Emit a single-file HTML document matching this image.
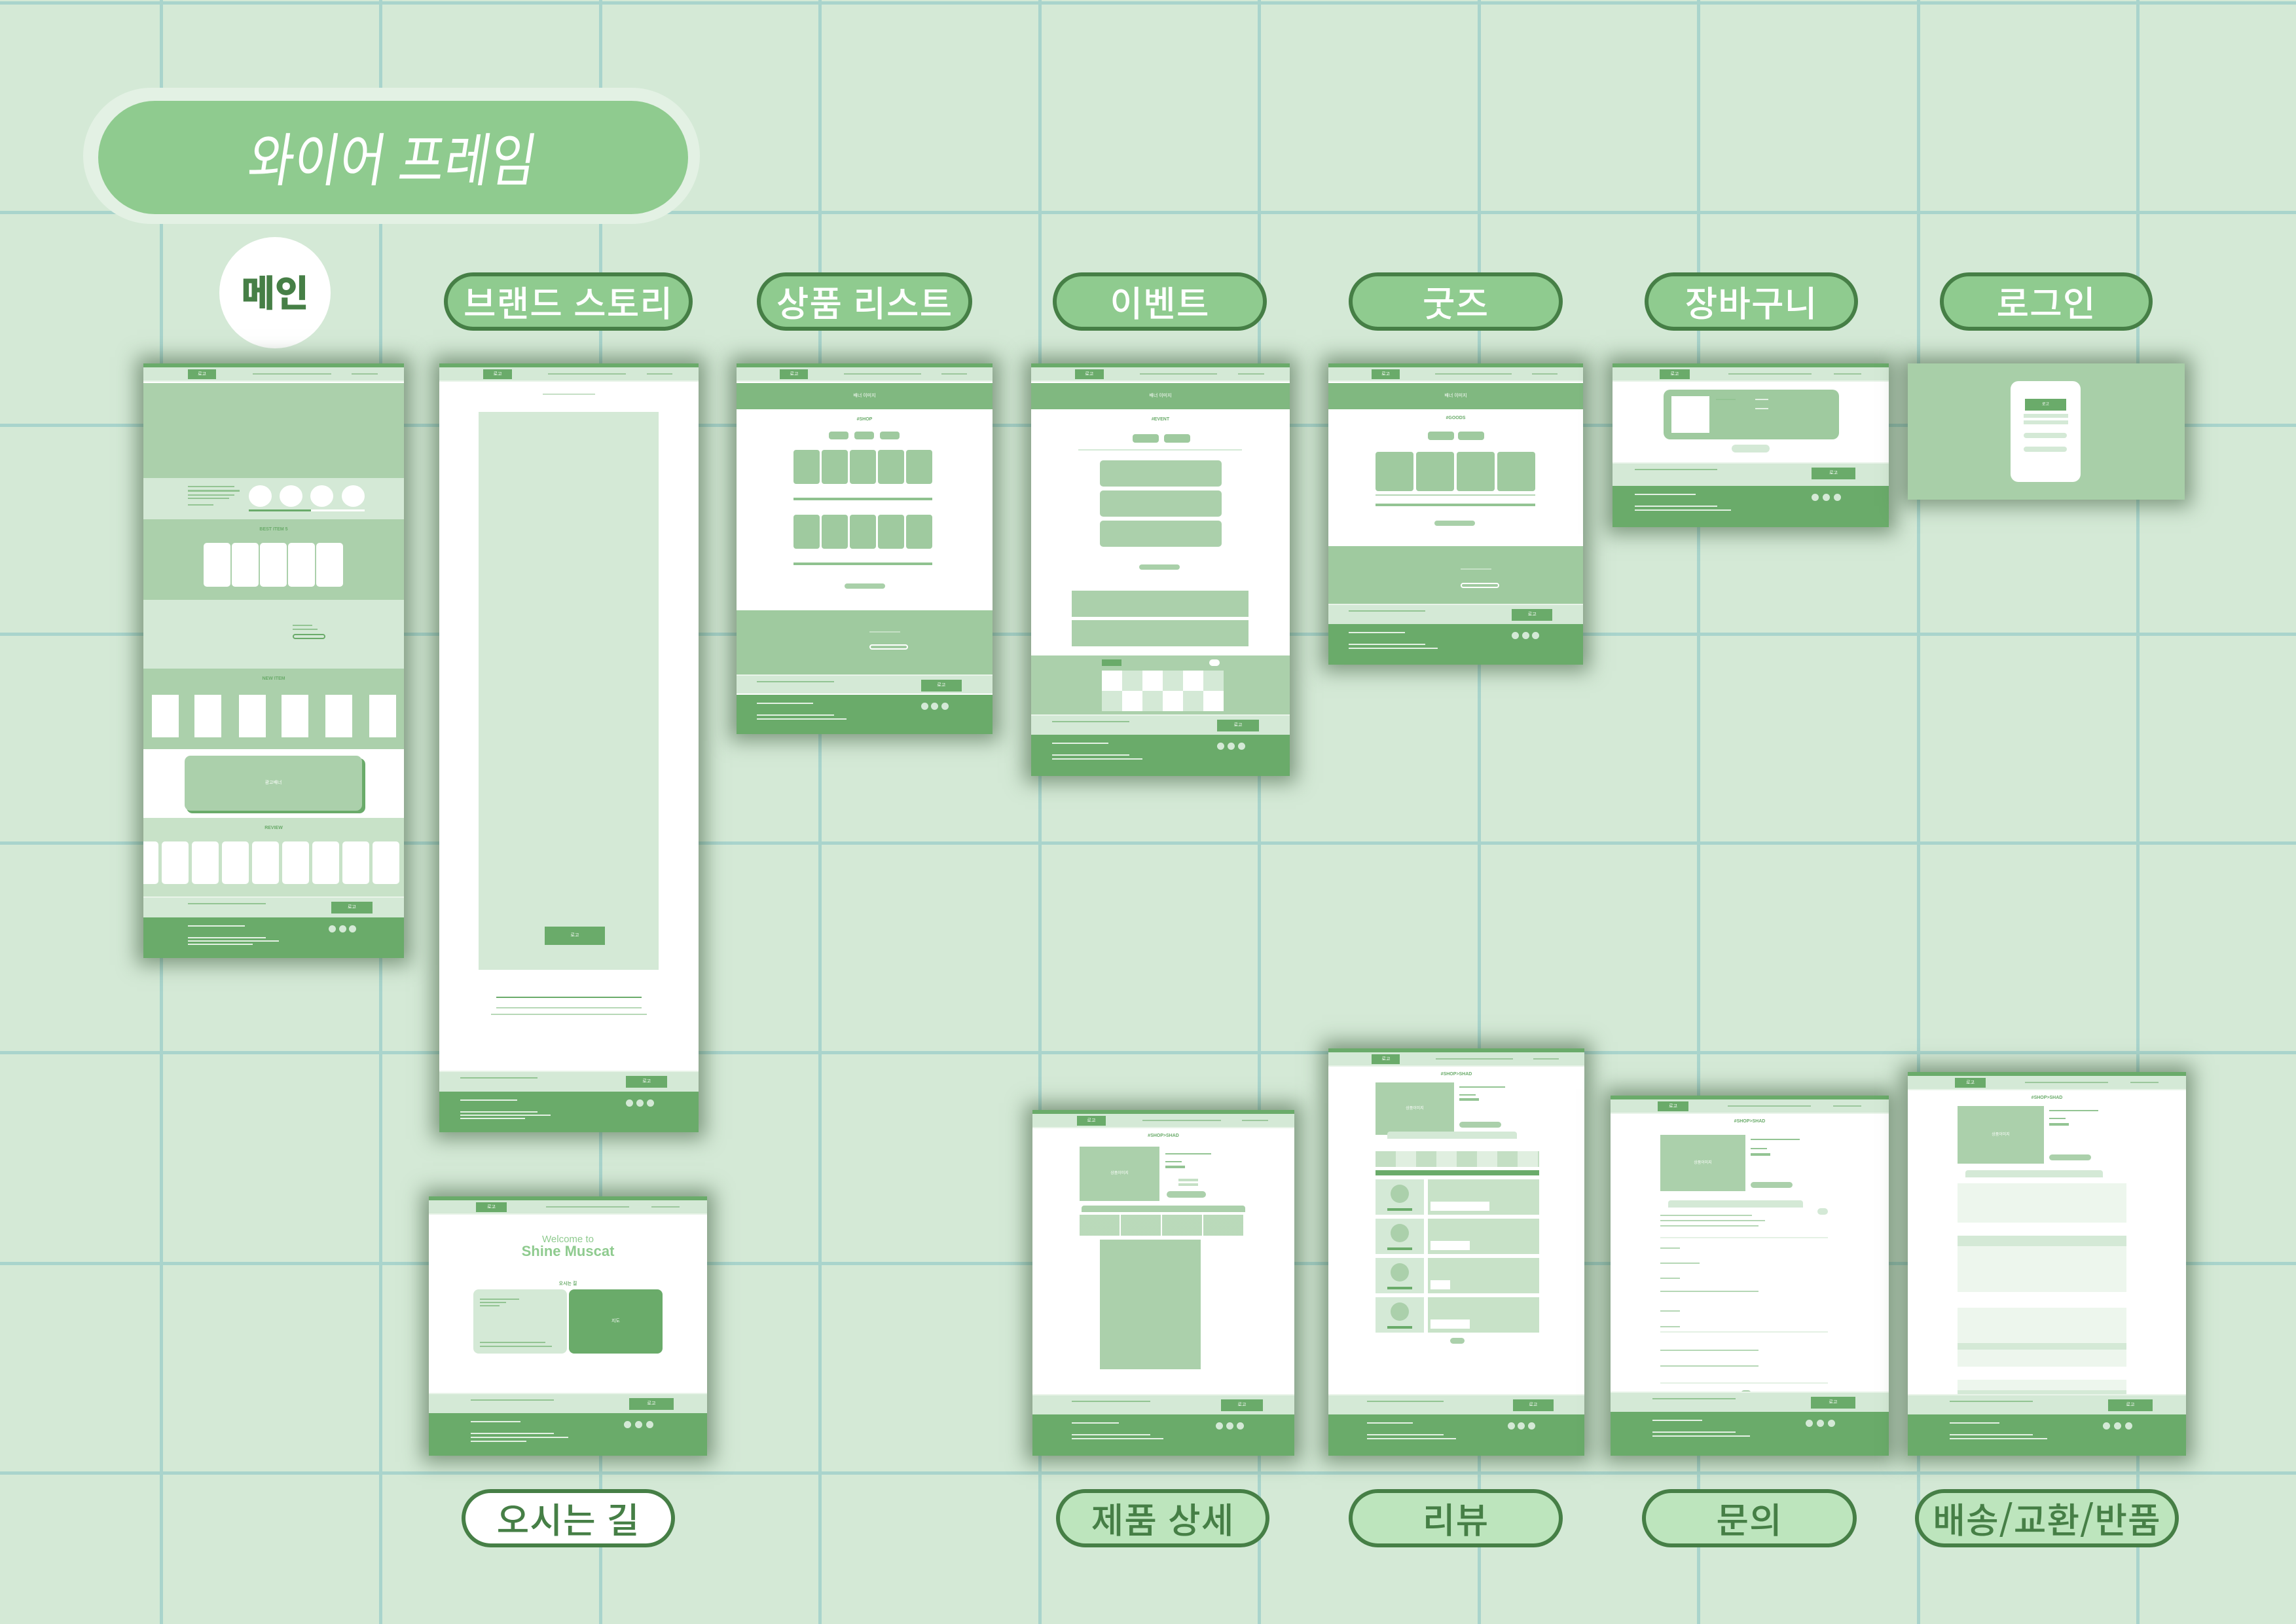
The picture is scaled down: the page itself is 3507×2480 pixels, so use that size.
<!DOCTYPE html>
<html lang="ko"><head><meta charset="utf-8">
<style>
*{margin:0;padding:0;box-sizing:border-box}
html,body{width:3507px;height:2480px;overflow:hidden}
body{background:#d4e9d6;position:relative;font-family:"Liberation Sans","Noto Sans CJK KR",sans-serif}
.a{position:absolute}
.vl{position:absolute;top:0;width:5px;height:2480px;background:#a9d4cc}
.hl{position:absolute;left:0;height:5px;width:3507px;background:#a9d4cc}
.pill{position:absolute;height:89px;border-radius:45px;border:6px solid #467f46;background:#8fcb8f;color:#fff;font-size:54px;font-weight:500;text-align:center;line-height:76px;font-family:"Noto Sans CJK KR",sans-serif;letter-spacing:1px}
.pill.b{background:#bde5bd;color:#467f46;height:89px}
.pill.wt{background:#fff;color:#467f46}
.mk{position:absolute;background:#fff;box-shadow:0 0 28px 10px rgba(55,85,55,.55);overflow:hidden}
.tb{position:absolute;left:0;top:0;width:100%;height:6px;background:#6aab6a}
.hd{position:absolute;left:0;top:6px;width:100%;height:22px;background:#d4e9d6;border-bottom:2px solid #e9f4e9}
.lg{position:absolute;left:17%;top:3px;width:11%;height:15px;background:#6aab6a;color:#fff;font-size:7px;text-align:center;line-height:15px}
.nv{position:absolute;top:9px;height:2px;background:#9cc79c}
.fl{position:absolute;left:0;width:100%;height:32px;bottom:62px;background:#d4e9d6;border-top:2px solid #e9f4e9}
.fbtn{position:absolute;right:12%;top:6px;width:16%;height:18px;background:#6aab6a;color:#fff;font-size:7px;text-align:center;line-height:18px}
.fd{position:absolute;left:0;width:100%;height:62px;bottom:0;background:#6aab6a}
.ci{position:absolute;top:12px;width:11px;height:11px;border-radius:50%;background:#d4e9d6}
.tl{position:absolute;height:2px;background:#e4f1e4}
.ln{position:absolute;height:2px;background:#93c493}
.g1{background:#6aab6a}.g2{background:#abd0ab}.g3{background:#d4e9d6}.g4{background:#80b880}.g5{background:#9fca9f}.w{background:#fff}
.t{position:absolute;color:#6aab6a;font-size:7px;font-weight:bold;text-align:center}
</style></head><body>

<div class="vl" style="left:244px"></div><div class="vl" style="left:579px"></div><div class="vl" style="left:915px"></div><div class="vl" style="left:1250px"></div><div class="vl" style="left:1586px"></div><div class="vl" style="left:1921px"></div><div class="vl" style="left:2257px"></div><div class="vl" style="left:2592px"></div><div class="vl" style="left:2928px"></div><div class="vl" style="left:3263px"></div>
<div class="hl" style="top:2px"></div><div class="hl" style="top:322px"></div><div class="hl" style="top:647px"></div><div class="hl" style="top:966px"></div><div class="hl" style="top:1285px"></div><div class="hl" style="top:1605px"></div><div class="hl" style="top:1927px"></div><div class="hl" style="top:2247px"></div>

<div class="a" style="left:127px;top:134px;width:942px;height:208px;border-radius:104px;background:#e3f1e4"></div>
<div class="a" style="left:150px;top:154px;width:901px;height:173px;border-radius:87px;background:#8fcb8f"></div>
<div class="a" style="left:150px;top:154px;width:901px;height:173px;color:#fff;font-size:88px;font-weight:400;text-align:center;line-height:170px;font-family:'Noto Sans CJK KR',sans-serif;transform:skewX(-9deg) scaleX(.86)">와이어 프레임</div>

<div class="a" style="left:335px;top:362px;width:170px;height:170px;border-radius:50%;background:#fff;color:#467f46;font-size:56px;font-weight:900;text-align:center;line-height:166px;font-family:'Noto Sans CJK KR',sans-serif">메인</div>
<div class="pill" style="left:678px;top:416px;width:380px">브랜드 스토리</div>
<div class="pill" style="left:1156px;top:416px;width:329px">상품 리스트</div>
<div class="pill" style="left:1608px;top:416px;width:327px">이벤트</div>
<div class="pill" style="left:2060px;top:416px;width:327px">굿즈</div>
<div class="pill" style="left:2512px;top:416px;width:326px">장바구니</div>
<div class="pill" style="left:2963px;top:416px;width:325px">로그인</div>

<div class="pill wt" style="left:705px;top:2274px;width:326px">오시는 길</div>
<div class="pill b" style="left:1613px;top:2274px;width:326px">제품 상세</div>
<div class="pill b" style="left:2060px;top:2274px;width:327px">리뷰</div>
<div class="pill b" style="left:2508px;top:2274px;width:328px">문의</div>
<div class="pill b" style="left:2925px;top:2274px;width:403px">배송/교환/반품</div>

<div class="mk" style="left:219px;top:555px;width:398px;height:908px">
 <div class="tb"></div><div class="hd"><div class="lg">로고</div><div class="nv" style="left:42%;width:30%"></div><div class="nv" style="left:80%;width:10%"></div></div>
 <div class="a g2" style="left:0;top:30px;width:100%;height:145px"></div>
 <div class="a g3" style="left:0;top:175px;width:100%;height:63px">
  <div class="ln" style="left:17%;top:12px;width:18%"></div><div class="ln" style="left:17%;top:18px;width:20%;height:3px"></div><div class="ln" style="left:17%;top:25px;width:18%"></div><div class="ln" style="left:17%;top:30px;width:16%"></div><div class="ln" style="left:17%;top:40px;width:10%"></div>
  <div class="a w" style="left:161px;top:11px;width:35px;height:33px;border-radius:50%"></div><div class="a w" style="left:208px;top:11px;width:35px;height:33px;border-radius:50%"></div><div class="a w" style="left:255px;top:11px;width:35px;height:33px;border-radius:50%"></div><div class="a w" style="left:303px;top:11px;width:35px;height:33px;border-radius:50%"></div>
  <div class="a w" style="left:161px;top:48px;width:177px;height:3px"></div><div class="a g1" style="left:161px;top:48px;width:95px;height:3px"></div>
 </div>
 <div class="a g2" style="left:0;top:238px;width:100%;height:123px"><div class="t" style="left:0;width:100%;top:12px">BEST ITEM 5</div>
  <div class="a w" style="left:92px;top:36px;width:41px;height:67px;border-radius:5px"></div><div class="a w" style="left:135px;top:36px;width:41px;height:67px;border-radius:5px"></div><div class="a w" style="left:178px;top:36px;width:41px;height:67px;border-radius:5px"></div><div class="a w" style="left:221px;top:36px;width:41px;height:67px;border-radius:5px"></div><div class="a w" style="left:264px;top:36px;width:41px;height:67px;border-radius:5px"></div></div>
 <div class="a g3" style="left:0;top:361px;width:100%;height:105px"><div class="ln" style="left:228px;top:38px;width:30px"></div><div class="ln" style="left:228px;top:44px;width:38px"></div><div class="a" style="left:228px;top:52px;width:50px;height:8px;border:2px solid #6aab6a;border-radius:5px"></div></div>
 <div class="a g2" style="left:0;top:466px;width:100%;height:123px"><div class="t" style="left:0;width:100%;top:12px">NEW ITEM</div>
  <div class="a w" style="left:13px;top:40px;width:41px;height:65px"></div><div class="a w" style="left:78px;top:40px;width:41px;height:65px"></div><div class="a w" style="left:146px;top:40px;width:41px;height:65px"></div><div class="a w" style="left:211px;top:40px;width:41px;height:65px"></div><div class="a w" style="left:278px;top:40px;width:41px;height:65px"></div><div class="a w" style="left:345px;top:40px;width:41px;height:65px"></div></div>
 <div class="a w" style="left:0;top:589px;width:100%;height:105px"><div class="a g1" style="left:66px;top:14px;width:273px;height:84px;border-radius:9px"></div><div class="a g2" style="left:63px;top:10px;width:271px;height:84px;border-radius:9px;color:#fff;font-size:7px;text-align:center;line-height:84px">광고배너</div></div>
 <div class="a" style="left:0;top:694px;width:100%;height:123px;background:#c8e2c8"><div class="t" style="left:0;width:100%;top:12px">REVIEW</div>
  <div class="a w" style="left:-18px;top:36px;width:41px;height:65px;border-radius:5px"></div><div class="a w" style="left:28px;top:36px;width:41px;height:65px;border-radius:5px"></div><div class="a w" style="left:74px;top:36px;width:41px;height:65px;border-radius:5px"></div><div class="a w" style="left:120px;top:36px;width:41px;height:65px;border-radius:5px"></div><div class="a w" style="left:166px;top:36px;width:41px;height:65px;border-radius:5px"></div><div class="a w" style="left:212px;top:36px;width:41px;height:65px;border-radius:5px"></div><div class="a w" style="left:258px;top:36px;width:41px;height:65px;border-radius:5px"></div><div class="a w" style="left:304px;top:36px;width:41px;height:65px;border-radius:5px"></div><div class="a w" style="left:350px;top:36px;width:41px;height:65px;border-radius:5px"></div></div>
 <div class="fl"><div class="fbtn">로고</div><div class="ln" style="left:17%;top:8px;width:30%"></div></div>
 <div class="fd"><div class="ci" style="left:71%"></div><div class="ci" style="left:75%"></div><div class="ci" style="left:79%"></div><div class="tl" style="left:17%;top:12px;width:22%"></div><div class="tl" style="left:17%;top:30px;width:30%"></div><div class="tl" style="left:17%;top:35px;width:35%"></div><div class="tl" style="left:17%;top:40px;width:25%"></div></div>
</div>

<div class="mk" style="left:671px;top:555px;width:396px;height:1174px">
 <div class="tb"></div><div class="hd"><div class="lg">로고</div><div class="nv" style="left:42%;width:30%"></div><div class="nv" style="left:80%;width:10%"></div></div>
 <div class="ln" style="left:40%;top:46px;width:20%;background:#c5dfc5"></div>
 <div class="a g3" style="left:60px;top:74px;width:275px;height:852px"></div>
 <div class="a g1" style="left:161px;top:860px;width:92px;height:28px;color:#fff;font-size:7px;text-align:center;line-height:28px">로고</div>
 <div class="ln" style="left:22%;top:967px;width:56%;background:#6aab6a"></div>
 <div class="ln" style="left:22%;top:983px;width:56%;background:#b7d8b7"></div><div class="ln" style="left:20%;top:993px;width:60%;background:#b7d8b7"></div>
 <div class="fl"><div class="fbtn">로고</div><div class="ln" style="left:8%;top:8px;width:30%"></div></div>
 <div class="fd"><div class="ci" style="left:72%"></div><div class="ci" style="left:76%"></div><div class="ci" style="left:80%"></div><div class="tl" style="left:8%;top:12px;width:22%"></div><div class="tl" style="left:8%;top:30px;width:30%"></div><div class="tl" style="left:8%;top:35px;width:35%"></div><div class="tl" style="left:8%;top:40px;width:25%"></div></div>
</div>

<div class="mk" style="left:1125px;top:555px;width:391px;height:566px">
 <div class="tb"></div><div class="hd"><div class="lg">로고</div><div class="nv" style="left:42%;width:30%"></div><div class="nv" style="left:80%;width:10%"></div></div>
 <div class="a g4" style="left:0;top:30px;width:100%;height:40px;color:#fff;font-size:7px;text-align:center;line-height:40px">배너 이미지</div>
 <div class="t" style="left:0;width:100%;top:82px">#SHOP</div>
 <div class="a g5" style="left:141px;top:104px;width:30px;height:12px;border-radius:4px"></div><div class="a g5" style="left:180px;top:104px;width:30px;height:12px;border-radius:4px"></div><div class="a g5" style="left:219px;top:104px;width:30px;height:12px;border-radius:4px"></div>
 <div class="a g5" style="left:87px;top:132px;width:40px;height:52px;border-radius:4px"></div><div class="a g5" style="left:130px;top:132px;width:40px;height:52px;border-radius:4px"></div><div class="a g5" style="left:173px;top:132px;width:40px;height:52px;border-radius:4px"></div><div class="a g5" style="left:216px;top:132px;width:40px;height:52px;border-radius:4px"></div><div class="a g5" style="left:259px;top:132px;width:40px;height:52px;border-radius:4px"></div>
 <div class="ln" style="left:87px;top:205px;width:212px;height:4px;background:#8fc28f"></div>
 <div class="a g5" style="left:87px;top:231px;width:40px;height:52px;border-radius:4px"></div><div class="a g5" style="left:130px;top:231px;width:40px;height:52px;border-radius:4px"></div><div class="a g5" style="left:173px;top:231px;width:40px;height:52px;border-radius:4px"></div><div class="a g5" style="left:216px;top:231px;width:40px;height:52px;border-radius:4px"></div><div class="a g5" style="left:259px;top:231px;width:40px;height:52px;border-radius:4px"></div>
 <div class="ln" style="left:87px;top:304px;width:212px;height:4px;background:#8fc28f"></div>
 <div class="ln" style="left:165px;top:336px;width:62px;height:8px;background:#a9d0a9;border-radius:4px"></div>
 <div class="a g5" style="left:0;top:377px;width:100%;height:103px"><div class="ln" style="left:52%;top:32px;width:12%;background:#c5e0c5"></div><div class="a" style="left:52%;top:52px;width:15%;height:8px;border:2px solid #fff;border-radius:5px"></div></div>
 <div class="fl" style="height:29px"><div class="fbtn">로고</div><div class="ln" style="left:8%;top:8px;width:30%"></div></div>
 <div class="fd" style="height:60px"><div class="ci" style="left:72%"></div><div class="ci" style="left:76%"></div><div class="ci" style="left:80%"></div><div class="tl" style="left:8%;top:12px;width:22%"></div><div class="tl" style="left:8%;top:30px;width:30%"></div><div class="tl" style="left:8%;top:36px;width:35%"></div></div>
</div>

<div class="mk" style="left:1575px;top:555px;width:395px;height:630px">
 <div class="tb"></div><div class="hd"><div class="lg">로고</div><div class="nv" style="left:42%;width:30%"></div><div class="nv" style="left:80%;width:10%"></div></div>
 <div class="a g4" style="left:0;top:30px;width:100%;height:40px;color:#fff;font-size:7px;text-align:center;line-height:40px">배너 이미지</div>
 <div class="t" style="left:0;width:100%;top:82px">#EVENT</div>
 <div class="a g5" style="left:155px;top:108px;width:40px;height:13px;border-radius:4px"></div><div class="a g5" style="left:203px;top:108px;width:40px;height:13px;border-radius:4px"></div>
 <div class="ln" style="left:72px;top:131px;width:250px;background:#d4e9d6"></div>
 <div class="a g2" style="left:105px;top:148px;width:186px;height:40px;border-radius:5px"></div><div class="a g2" style="left:105px;top:194px;width:186px;height:40px;border-radius:5px"></div><div class="a g2" style="left:105px;top:240px;width:186px;height:40px;border-radius:5px"></div>
 <div class="ln" style="left:165px;top:307px;width:62px;height:8px;background:#a9d0a9;border-radius:4px"></div>
 <div class="a g2" style="left:62px;top:347px;width:270px;height:40px"></div><div class="a g2" style="left:62px;top:392px;width:270px;height:40px"></div>
 <div class="a g2" style="left:0;top:446px;width:100%;height:92px">
  <div class="a g1" style="left:108px;top:6px;width:30px;height:10px"></div><div class="a w" style="left:272px;top:6px;width:16px;height:10px;border-radius:5px"></div>
  <div class="a" style="left:108px;top:23px;width:186px;height:62px;background:repeating-linear-gradient(90deg,#fff 0 31px,#d4e9d6 31px 62px)"></div>
  <div class="a" style="left:108px;top:54px;width:186px;height:31px;background:repeating-linear-gradient(90deg,#d4e9d6 0 31px,#fff 31px 62px)"></div>
 </div>
 <div class="fl" style="height:31px;bottom:63px"><div class="fbtn">로고</div><div class="ln" style="left:8%;top:8px;width:30%"></div></div>
 <div class="fd" style="height:63px"><div class="ci" style="left:72%"></div><div class="ci" style="left:76%"></div><div class="ci" style="left:80%"></div><div class="tl" style="left:8%;top:12px;width:22%"></div><div class="tl" style="left:8%;top:30px;width:30%"></div><div class="tl" style="left:8%;top:36px;width:35%"></div></div>
</div>

<div class="mk" style="left:2029px;top:555px;width:389px;height:460px">
 <div class="tb"></div><div class="hd"><div class="lg">로고</div><div class="nv" style="left:42%;width:30%"></div><div class="nv" style="left:80%;width:10%"></div></div>
 <div class="a g4" style="left:0;top:30px;width:100%;height:40px;color:#fff;font-size:7px;text-align:center;line-height:40px">배너 이미지</div>
 <div class="t" style="left:0;width:100%;top:80px">#GOODS</div>
 <div class="a g5" style="left:152px;top:104px;width:40px;height:13px;border-radius:4px"></div><div class="a g5" style="left:198px;top:104px;width:40px;height:13px;border-radius:4px"></div>
 <div class="a g5" style="left:72px;top:135px;width:58px;height:60px;border-radius:4px"></div><div class="a g5" style="left:134px;top:135px;width:58px;height:60px;border-radius:4px"></div><div class="a g5" style="left:196px;top:135px;width:58px;height:60px;border-radius:4px"></div><div class="a g5" style="left:258px;top:135px;width:58px;height:60px;border-radius:4px"></div>
 <div class="ln" style="left:72px;top:200px;width:244px;background:#b5d7b5"></div><div class="ln" style="left:72px;top:214px;width:244px;height:4px"></div>
 <div class="ln" style="left:162px;top:240px;width:62px;height:8px;background:#a9d0a9;border-radius:4px"></div>
 <div class="a g5" style="left:0;top:279px;width:100%;height:99px"><div class="ln" style="left:52%;top:34px;width:12%;background:#c5e0c5"></div><div class="a" style="left:52%;top:56px;width:15%;height:8px;border:2px solid #fff;border-radius:5px"></div></div>
 <div class="fl" style="height:31px"><div class="fbtn">로고</div><div class="ln" style="left:8%;top:8px;width:30%"></div></div>
 <div class="fd"><div class="ci" style="left:72%"></div><div class="ci" style="left:76%"></div><div class="ci" style="left:80%"></div><div class="tl" style="left:8%;top:12px;width:22%"></div><div class="tl" style="left:8%;top:30px;width:30%"></div><div class="tl" style="left:8%;top:36px;width:35%"></div></div>
</div>

<div class="mk" style="left:2463px;top:555px;width:422px;height:250px">
 <div class="tb"></div><div class="hd"><div class="lg">로고</div><div class="nv" style="left:42%;width:30%"></div><div class="nv" style="left:80%;width:10%"></div></div>
 <div class="a g5" style="left:78px;top:40px;width:268px;height:76px;border-radius:10px"><div class="a w" style="left:12px;top:10px;width:58px;height:56px"></div><div class="ln" style="left:80px;top:14px;width:30px"></div><div class="ln" style="left:140px;top:14px;width:20px;background:#e4f1e4"></div><div class="ln" style="left:140px;top:28px;width:20px;background:#e4f1e4"></div></div>
 <div class="a g3" style="left:182px;top:124px;width:58px;height:12px;border-radius:6px"></div>
 <div class="fl" style="height:36px;bottom:63px"><div class="fbtn">로고</div><div class="ln" style="left:8%;top:8px;width:30%"></div></div>
 <div class="fd" style="height:63px"><div class="ci" style="left:72%"></div><div class="ci" style="left:76%"></div><div class="ci" style="left:80%"></div><div class="tl" style="left:8%;top:12px;width:22%"></div><div class="tl" style="left:8%;top:30px;width:30%"></div><div class="tl" style="left:8%;top:36px;width:35%"></div></div>
</div>

<div class="mk" style="left:2914px;top:555px;width:423px;height:208px;background:#a8cfa8">
 <div class="a w" style="left:157px;top:27px;width:107px;height:154px;border-radius:12px">
  <div class="a g1" style="left:22px;top:27px;width:63px;height:18px;color:#fff;font-size:6px;text-align:center;line-height:18px">로고</div>
  <div class="a g3" style="left:20px;top:50px;width:68px;height:6px"></div><div class="a g3" style="left:20px;top:60px;width:68px;height:6px"></div>
  <div class="a g3" style="left:20px;top:79px;width:66px;height:8px;border-radius:4px"></div><div class="a g3" style="left:20px;top:100px;width:66px;height:8px;border-radius:4px"></div>
 </div>
</div>

<div class="mk" style="left:655px;top:1827px;width:425px;height:396px">
 <div class="tb"></div><div class="hd"><div class="lg">로고</div><div class="nv" style="left:42%;width:30%"></div><div class="nv" style="left:80%;width:10%"></div></div>
 <div class="a" style="left:0;top:58px;width:100%;text-align:center;color:#8fcb8f;font-size:15px;line-height:15px">Welcome to</div>
 <div class="a" style="left:0;top:73px;width:100%;text-align:center;color:#8fcb8f;font-size:22px;font-weight:bold;line-height:22px">Shine Muscat</div>
 <div class="t" style="left:0;width:100%;top:128px">오시는 길</div>
 <div class="a g3" style="left:68px;top:142px;width:143px;height:98px;border-radius:8px"><div class="ln" style="left:10px;top:14px;width:60px"></div><div class="ln" style="left:10px;top:19px;width:40px"></div><div class="ln" style="left:10px;top:24px;width:30px"></div><div class="ln" style="left:10px;top:80px;width:100px"></div><div class="ln" style="left:10px;top:86px;width:110px"></div></div>
 <div class="a g1" style="left:214px;top:142px;width:143px;height:98px;border-radius:8px;color:#fff;font-size:7px;text-align:center;line-height:98px">지도</div>
 <div class="fl" style="height:31px;bottom:65px"><div class="fbtn">로고</div><div class="ln" style="left:15%;top:8px;width:30%"></div></div>
 <div class="fd" style="height:65px"><div class="ci" style="left:70%"></div><div class="ci" style="left:74%"></div><div class="ci" style="left:78%"></div><div class="tl" style="left:15%;top:12px;width:18%"></div><div class="tl" style="left:15%;top:30px;width:30%"></div><div class="tl" style="left:15%;top:36px;width:35%"></div><div class="tl" style="left:15%;top:42px;width:20%"></div></div>
</div>

<div class="mk" style="left:1577px;top:1695px;width:400px;height:528px">
 <div class="tb"></div><div class="hd"><div class="lg">로고</div><div class="nv" style="left:42%;width:30%"></div><div class="nv" style="left:80%;width:10%"></div></div>
 <div class="t" style="left:0;width:100%;top:36px">#SHOP&gt;SHAD</div>
 <div class="a g2" style="left:72px;top:56px;width:122px;height:83px;color:#fff;font-size:6px;text-align:center;line-height:83px">상품이미지</div>
 <div class="ln" style="left:203px;top:66px;width:70px"></div><div class="ln" style="left:203px;top:78px;width:25px"></div><div class="ln" style="left:203px;top:85px;width:30px;height:4px"></div><div class="ln" style="left:223px;top:105px;width:30px;background:#c5e0c5;height:4px"></div><div class="ln" style="left:223px;top:112px;width:30px;background:#c5e0c5;height:4px"></div>
 <div class="a g2" style="left:205px;top:124px;width:60px;height:10px;border-radius:5px"></div>
 <div class="a g2" style="left:75px;top:146px;width:250px;height:10px;border-radius:4px 4px 0 0"></div>
 <div class="a" style="left:72px;top:160px;width:250px;height:32px;background:repeating-linear-gradient(90deg,#a9d0a9 0 61px,#fff 61px 63px);opacity:.8"></div>
 <div class="a g2" style="left:103px;top:198px;width:154px;height:198px"></div>
 <div class="fl" style="height:31px;bottom:63px"><div class="fbtn">로고</div><div class="ln" style="left:15%;top:8px;width:30%"></div></div>
 <div class="fd" style="height:63px"><div class="ci" style="left:70%"></div><div class="ci" style="left:74%"></div><div class="ci" style="left:78%"></div><div class="tl" style="left:15%;top:12px;width:18%"></div><div class="tl" style="left:15%;top:30px;width:30%"></div><div class="tl" style="left:15%;top:36px;width:35%"></div></div>
</div>

<div class="mk" style="left:2029px;top:1601px;width:391px;height:622px">
 <div class="tb"></div><div class="hd"><div class="lg">로고</div><div class="nv" style="left:42%;width:30%"></div><div class="nv" style="left:80%;width:10%"></div></div>
 <div class="t" style="left:0;width:100%;top:36px">#SHOP&gt;SHAD</div>
 <div class="a g2" style="left:72px;top:52px;width:120px;height:80px;color:#fff;font-size:6px;text-align:center;line-height:80px">상품이미지</div>
 <div class="ln" style="left:200px;top:58px;width:70px"></div><div class="ln" style="left:200px;top:70px;width:25px"></div><div class="ln" style="left:200px;top:76px;width:30px;height:4px"></div><div class="a g2" style="left:200px;top:112px;width:64px;height:9px;border-radius:5px"></div>
 <div class="a g3" style="left:90px;top:127px;width:198px;height:11px;border-radius:4px 4px 0 0"></div>
 <div class="a" style="left:72px;top:157px;width:250px;height:24px;background:repeating-linear-gradient(90deg,#c4dfc4 0 31px,#e0efe0 31px 62px)"></div>
 <div class="a g1" style="left:72px;top:186px;width:250px;height:8px"></div>
 <div class="a g3" style="left:72px;top:200px;width:74px;height:54px"><div class="a g2" style="left:23px;top:8px;width:28px;height:28px;border-radius:50%"></div><div class="ln" style="left:18px;top:44px;width:38px;height:4px;background:#6aab6a"></div></div>
 <div class="a" style="left:152px;top:200px;width:170px;height:54px;background:#c8e2c8"><div class="a w" style="left:4px;top:34px;width:90px;height:14px"></div></div>
 <div class="a g3" style="left:72px;top:260px;width:74px;height:54px"><div class="a g2" style="left:23px;top:8px;width:28px;height:28px;border-radius:50%"></div><div class="ln" style="left:18px;top:44px;width:38px;height:4px;background:#6aab6a"></div></div>
 <div class="a" style="left:152px;top:260px;width:170px;height:54px;background:#c8e2c8"><div class="a w" style="left:4px;top:34px;width:60px;height:14px"></div></div>
 <div class="a g3" style="left:72px;top:320px;width:74px;height:54px"><div class="a g2" style="left:23px;top:8px;width:28px;height:28px;border-radius:50%"></div><div class="ln" style="left:18px;top:44px;width:38px;height:4px;background:#6aab6a"></div></div>
 <div class="a" style="left:152px;top:320px;width:170px;height:54px;background:#c8e2c8"><div class="a w" style="left:4px;top:34px;width:30px;height:14px"></div></div>
 <div class="a g3" style="left:72px;top:380px;width:74px;height:54px"><div class="a g2" style="left:23px;top:8px;width:28px;height:28px;border-radius:50%"></div><div class="ln" style="left:18px;top:44px;width:38px;height:4px;background:#6aab6a"></div></div>
 <div class="a" style="left:152px;top:380px;width:170px;height:54px;background:#c8e2c8"><div class="a w" style="left:4px;top:34px;width:60px;height:14px"></div></div>
 <div class="a g2" style="left:186px;top:442px;width:22px;height:9px;border-radius:5px"></div>
 <div class="fl" style="height:31px;bottom:63px"><div class="fbtn">로고</div><div class="ln" style="left:15%;top:8px;width:30%"></div></div>
 <div class="fd" style="height:63px"><div class="ci" style="left:70%"></div><div class="ci" style="left:74%"></div><div class="ci" style="left:78%"></div><div class="tl" style="left:15%;top:12px;width:18%"></div><div class="tl" style="left:15%;top:30px;width:30%"></div><div class="tl" style="left:15%;top:36px;width:35%"></div></div>
</div>

<div class="mk" style="left:2460px;top:1673px;width:425px;height:550px">
 <div class="tb"></div><div class="hd"><div class="lg">로고</div><div class="nv" style="left:42%;width:30%"></div><div class="nv" style="left:80%;width:10%"></div></div>
 <div class="t" style="left:0;width:100%;top:36px">#SHOP&gt;SHAD</div>
 <div class="a g2" style="left:76px;top:60px;width:130px;height:86px;color:#fff;font-size:6px;text-align:center;line-height:86px">상품이미지</div>
 <div class="ln" style="left:214px;top:66px;width:75px"></div><div class="ln" style="left:214px;top:80px;width:25px"></div><div class="ln" style="left:214px;top:88px;width:30px;height:4px"></div><div class="a g2" style="left:214px;top:132px;width:64px;height:9px;border-radius:5px"></div>
 <div class="a g3" style="left:88px;top:160px;width:206px;height:11px;border-radius:4px 4px 0 0"></div>
 <div class="ln" style="left:76px;top:182px;width:140px;background:#b5d7b5"></div><div class="ln" style="left:76px;top:190px;width:160px;background:#b5d7b5"></div><div class="ln" style="left:76px;top:198px;width:150px;background:#b5d7b5"></div><div class="a g3" style="left:316px;top:172px;width:16px;height:10px;border-radius:5px"></div>
 <div class="ln" style="left:76px;top:216px;width:256px;background:#e4f1e4"></div>
 <div class="ln" style="left:76px;top:232px;width:30px;background:#b5d7b5"></div><div class="ln" style="left:76px;top:255px;width:60px;background:#b5d7b5"></div><div class="ln" style="left:76px;top:278px;width:30px;background:#b5d7b5"></div><div class="ln" style="left:76px;top:298px;width:150px;background:#b5d7b5"></div><div class="ln" style="left:76px;top:328px;width:30px;background:#b5d7b5"></div><div class="ln" style="left:76px;top:352px;width:30px;background:#b5d7b5"></div><div class="ln" style="left:76px;top:360px;width:256px;background:#e4f1e4"></div><div class="ln" style="left:76px;top:388px;width:150px;background:#b5d7b5"></div><div class="ln" style="left:76px;top:412px;width:150px;background:#b5d7b5"></div><div class="ln" style="left:76px;top:438px;width:256px;background:#e4f1e4"></div>
 <div class="a g2" style="left:199px;top:450px;width:16px;height:10px;border-radius:5px"></div>
 <div class="fl" style="height:31px;bottom:67px"><div class="fbtn">로고</div><div class="ln" style="left:15%;top:8px;width:30%"></div></div>
 <div class="fd" style="height:67px"><div class="ci" style="left:70%"></div><div class="ci" style="left:74%"></div><div class="ci" style="left:78%"></div><div class="tl" style="left:15%;top:12px;width:18%"></div><div class="tl" style="left:15%;top:30px;width:30%"></div><div class="tl" style="left:15%;top:36px;width:35%"></div></div>
</div>

<div class="mk" style="left:2914px;top:1637px;width:425px;height:586px">
 <div class="tb"></div><div class="hd"><div class="lg">로고</div><div class="nv" style="left:42%;width:30%"></div><div class="nv" style="left:80%;width:10%"></div></div>
 <div class="t" style="left:0;width:100%;top:36px">#SHOP&gt;SHAD</div>
 <div class="a g2" style="left:76px;top:52px;width:132px;height:88px;color:#fff;font-size:6px;text-align:center;line-height:88px">상품이미지</div>
 <div class="ln" style="left:216px;top:58px;width:75px"></div><div class="ln" style="left:216px;top:70px;width:25px"></div><div class="ln" style="left:216px;top:78px;width:30px;height:4px"></div><div class="a g2" style="left:216px;top:126px;width:64px;height:9px;border-radius:5px"></div>
 <div class="a g3" style="left:88px;top:150px;width:210px;height:11px;border-radius:4px 4px 0 0"></div>
 <div class="a" style="left:76px;top:170px;width:258px;height:60px;background:#edf6ed"></div>
 <div class="a" style="left:76px;top:250px;width:258px;height:86px;background:#edf6ed"><div class="a g3" style="left:0;top:0;width:100%;height:16px"></div></div>
 <div class="a" style="left:76px;top:360px;width:258px;height:90px;background:#edf6ed"><div class="a g3" style="left:0;top:54px;width:100%;height:10px"></div></div>
 <div class="a" style="left:76px;top:470px;width:258px;height:28px;background:#edf6ed"><div class="a g3" style="left:0;top:16px;width:100%;height:10px"></div></div>
 <div class="fl" style="height:31px;bottom:63px"><div class="fbtn">로고</div><div class="ln" style="left:15%;top:8px;width:30%"></div></div>
 <div class="fd" style="height:63px"><div class="ci" style="left:70%"></div><div class="ci" style="left:74%"></div><div class="ci" style="left:78%"></div><div class="tl" style="left:15%;top:12px;width:18%"></div><div class="tl" style="left:15%;top:30px;width:30%"></div><div class="tl" style="left:15%;top:36px;width:35%"></div></div>
</div>

</body></html>
